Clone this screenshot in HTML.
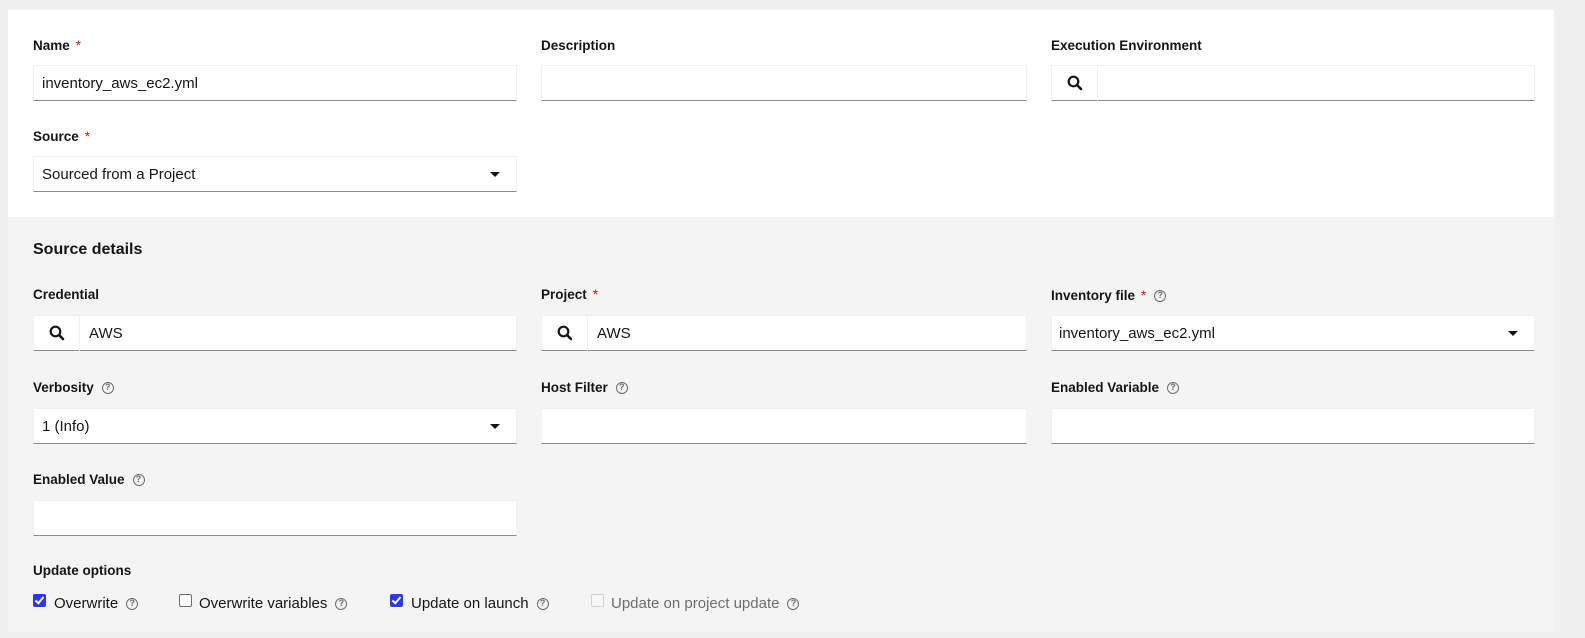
<!DOCTYPE html>
<html><head><meta charset="utf-8"><style>
*{box-sizing:border-box;margin:0;padding:0}
body{width:1585px;height:638px;background:#f0f0f0;font-family:"Liberation Sans",sans-serif;color:#151515;position:relative;overflow:hidden}
.card{position:absolute;left:8px;top:10px;width:1546px;height:622px;background:#fff}
.gray{position:absolute;left:8px;top:217px;width:1546px;height:415px;background:#f4f4f4}
.lbl{position:absolute;font-size:13.5px;font-weight:bold;line-height:16px}
.req{color:#c9190b;margin-left:6px;font-weight:normal}
.help{display:inline-block;width:12px;height:12px;border:1.4px solid #6a6e73;border-radius:50%;font-size:9px;line-height:9.5px;text-align:center;color:#6a6e73;font-weight:bold;margin-left:8px;vertical-align:middle;position:relative;top:0}
.in{position:absolute;height:36px;background:#fff;border:1px solid #f0f0f0;border-bottom:1px solid #8a8d90;font-size:15px;line-height:36px;padding-left:8px}
.caret{position:absolute;right:16px;top:15px;width:0;height:0;border-left:5px solid transparent;border-right:5px solid transparent;border-top:5px solid #151515}
.srch{position:absolute;left:0;top:0;width:46px;height:35px;border-right:1px solid #f0f0f0}
.srch svg{position:absolute;left:15px;top:9px}
.h{position:absolute;left:33px;top:241px;font-size:16px;font-weight:bold}
.cb{position:absolute;top:595px;font-size:15px;line-height:18px}
.box{position:absolute;top:594px;width:13px;height:13px;border-radius:2px}
.on{background:#2b38f0}
.on:after{content:"";position:absolute;left:4px;top:1px;width:3px;height:7px;border:solid #fff;border-width:0 2px 2px 0;transform:rotate(40deg)}
.off{border:1px solid #6a6e73;background:#fff}
.dis{border:1px solid #d2d2d2;background:#f8f8f8}
</style></head><body>
<div class="card"></div><div class="gray"></div>
<div class="lbl" style="left:33px;top:38px">Name<span class="req">*</span></div>
<div class="lbl" style="left:541px;top:38px">Description</div>
<div class="lbl" style="left:1051px;top:38px">Execution Environment</div>
<div class="in" style="left:33px;top:65px;width:484px">inventory_aws_ec2.yml</div>
<div class="in" style="left:541px;top:65px;width:486px"></div>
<div class="in" style="left:1051px;top:65px;width:484px"><div class="srch"><svg width="16" height="16" viewBox="0 0 16 16"><circle cx="6.5" cy="6.5" r="4.8" fill="none" stroke="#151515" stroke-width="2.2"/><path d="M10 10l4 4" stroke="#151515" stroke-width="2.6" stroke-linecap="round"/></svg></div></div>
<div class="lbl" style="left:33px;top:129px">Source<span class="req">*</span></div>
<div class="in" style="left:33px;top:156px;width:484px">Sourced from a Project<div class="caret"></div></div>
<div class="h">Source details</div>
<div class="lbl" style="left:33px;top:287px">Credential</div>
<div class="lbl" style="left:541px;top:287px">Project<span class="req">*</span></div>
<div class="lbl" style="left:1051px;top:288px">Inventory file<span class="req">*</span><span class="help">?</span></div>
<div class="in" style="left:33px;top:315px;width:484px;padding-left:55px"><div class="srch"><svg width="16" height="16" viewBox="0 0 16 16"><circle cx="6.5" cy="6.5" r="4.8" fill="none" stroke="#151515" stroke-width="2.2"/><path d="M10 10l4 4" stroke="#151515" stroke-width="2.6" stroke-linecap="round"/></svg></div>AWS</div>
<div class="in" style="left:541px;top:315px;width:486px;padding-left:55px"><div class="srch"><svg width="16" height="16" viewBox="0 0 16 16"><circle cx="6.5" cy="6.5" r="4.8" fill="none" stroke="#151515" stroke-width="2.2"/><path d="M10 10l4 4" stroke="#151515" stroke-width="2.6" stroke-linecap="round"/></svg></div>AWS</div>
<div class="in" style="left:1051px;top:315px;width:484px;padding-left:7px">inventory_aws_ec2.yml<div class="caret"></div></div>
<div class="lbl" style="left:33px;top:380px">Verbosity<span class="help">?</span></div>
<div class="lbl" style="left:541px;top:380px">Host Filter<span class="help">?</span></div>
<div class="lbl" style="left:1051px;top:380px">Enabled Variable<span class="help">?</span></div>
<div class="in" style="left:33px;top:408px;width:484px">1 (Info)<div class="caret"></div></div>
<div class="in" style="left:541px;top:408px;width:486px"></div>
<div class="in" style="left:1051px;top:408px;width:484px"></div>
<div class="lbl" style="left:33px;top:472px">Enabled Value<span class="help">?</span></div>
<div class="in" style="left:33px;top:500px;width:484px"></div>
<div class="lbl" style="left:33px;top:563px;font-weight:bold">Update options</div>
<div class="box on" style="left:33px"></div><div class="cb" style="left:54px">Overwrite<span class="help">?</span></div>
<div class="box off" style="left:179px"></div><div class="cb" style="left:199px">Overwrite variables<span class="help">?</span></div>
<div class="box on" style="left:390px"></div><div class="cb" style="left:411px">Update on launch<span class="help">?</span></div>
<div class="box dis" style="left:591px"></div><div class="cb" style="left:611px;color:#6a6e73">Update on project update<span class="help">?</span></div>
</body></html>
